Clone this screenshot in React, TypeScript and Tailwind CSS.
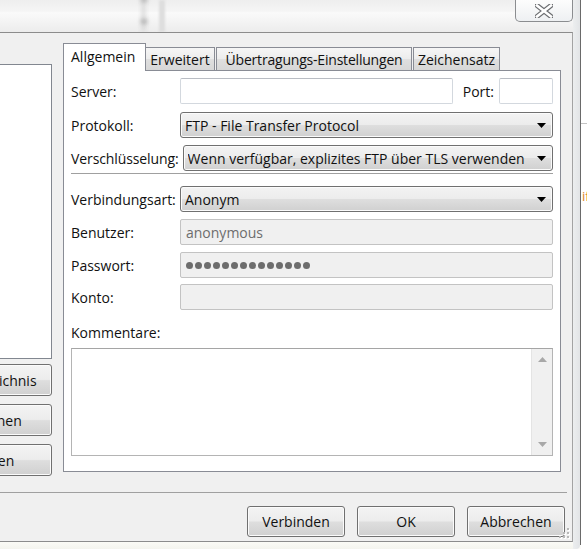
import type { ReactNode } from 'react'

// shared win7-ish bevel used by buttons and dropdowns
const BEVEL =
  'border border-[#707070] bg-[linear-gradient(#f3f3f3,#ececec_48%,#dedede_52%,#d0d0d0)] shadow-[inset_0_0_0_1px_#fbfbfb]'

const TAB_BG = 'bg-[linear-gradient(#f6f6f6,#ececec_50%,#dfdfdf_52%,#d7d7d7)]'

function DropArrow() {
  return (
    <svg width="9" height="5" viewBox="0 0 9 5" className="shrink-0">
      <path d="M0 0h9L4.5 5z" fill="#000" />
    </svg>
  )
}

function Combo({ value, className = '' }: { value: string; className?: string }) {
  return (
    <div className={`h-[26px] flex items-center rounded-[3px] pl-[4px] pr-[6px] ${BEVEL} ${className}`}>
      <span className="flex-1 truncate">{value}</span>
      <DropArrow />
    </div>
  )
}

function Field({ disabled, children, className = '' }: { disabled?: boolean; children?: ReactNode; className?: string }) {
  return (
    <div
      className={
        disabled
          ? `h-[26px] flex items-center rounded-[2px] border border-[#c3c3c3] bg-[#f0f0f0] px-[5px] text-[#6d6d6d] ${className}`
          : `h-[26px] flex items-center rounded-[2px] border border-[#d3d8de] border-t-[#b9bdc4] bg-white px-[5px] ${className}`
      }
    >
      {children}
    </div>
  )
}

function Btn({ children, className = '' }: { children: ReactNode; className?: string }) {
  return (
    <div className={`h-[31px] flex items-center justify-center rounded-[3px] whitespace-nowrap ${BEVEL} ${className}`}>
      {children}
    </div>
  )
}

function Label({ children }: { children: ReactNode }) {
  return <span className="w-[109px] shrink-0 whitespace-nowrap">{children}</span>
}

function CloseGlyph() {
  return (
    <svg width="18" height="14" viewBox="0 0 18 14">
      <path d="M2 1.5L16 12.5M16 1.5L2 12.5" stroke="#6b6d70" strokeWidth="5" strokeLinecap="square" />
      <path d="M2 1.5L16 12.5M16 1.5L2 12.5" stroke="#ffffff" strokeWidth="2.6" strokeLinecap="square" />
    </svg>
  )
}

function TitleStrip() {
  return (
    <div className="h-[32px] relative bg-[linear-gradient(#eeeeee,#f5f5f5_35%,#fafafa_40%,#ececec)] overflow-hidden">
      <div className="absolute left-[142px] top-0 w-[3px] h-[32px] bg-[#d2d2d2] blur-[2px]" />
      <div className="absolute left-[159px] top-0 w-[6px] h-[32px] bg-[#dedede] blur-[1px]" />
      <div className="absolute left-[141px] top-[-3px] w-[6px] h-[5px] bg-[#b0b0b0] blur-[2px]" />
      <div className="absolute left-[141px] top-[19px] w-[6px] h-[5px] bg-[#b0b0b0] blur-[2px]" />
      <div className="absolute left-[515px] top-0 w-[58px] h-[22px] rounded-b-[5px] border border-t-0 border-[#8b8d90] bg-[linear-gradient(#fdfdfd,#eef0f2)] flex items-center justify-center">
        <CloseGlyph />
      </div>
    </div>
  )
}

function Tabs() {
  return (
    <div className="h-[27px] flex items-end whitespace-nowrap">
      <div className="w-[83px] h-[28px] -mb-px relative z-10 border border-b-0 border-[#898c95] bg-white pl-[7px] pt-[2px]">
        Allgemein
      </div>
      <div className={`w-[69px] h-[23px] border-t border-r border-[#898c95] flex items-center justify-center ${TAB_BG}`}>
        Erweitert
      </div>
      <div className={`w-[196px] h-[23px] ml-[1px] border border-b-0 border-[#898c95] flex items-center justify-center tracking-[-0.2px] ${TAB_BG}`}>
        Übertragungs-Einstellungen
      </div>
      <div className={`w-[87px] h-[23px] ml-[1px] border border-b-0 border-[#898c95] flex items-center justify-center ${TAB_BG}`}>
        Zeichensatz
      </div>
    </div>
  )
}

function GeneralPage() {
  return (
    <div className="h-[402px] border border-[#898c95] bg-white px-[7px] pt-[7px] flex flex-col">
      <div className="flex items-center">
        <Label>Server:</Label>
        <Field className="flex-1" />
        <span className="ml-[10px] mr-[5px]">Port:</span>
        <Field className="w-[54px]" />
      </div>
      <div className="flex items-center mt-[8px]">
        <Label>Protokoll:</Label>
        <Combo className="flex-1" value="FTP - File Transfer Protocol" />
      </div>
      <div className="flex items-center mt-[7px]">
        <span className="whitespace-nowrap tracking-[-0.1px]">Verschlüsselung:</span>
        <Combo className="flex-1 ml-[4px]" value="Wenn verfügbar, explizites FTP über TLS verwenden" />
      </div>
      <div className="mt-[2px] h-px bg-[#a0a0a0]" />
      <div className="flex items-center mt-[12px]">
        <Label>Verbindungsart:</Label>
        <Combo className="flex-1" value="Anonym" />
      </div>
      <div className="flex items-center mt-[7px]">
        <Label>Benutzer:</Label>
        <Field disabled className="flex-1">anonymous</Field>
      </div>
      <div className="flex items-center mt-[7px]">
        <Label>Passwort:</Label>
        <Field disabled className="flex-1">
          <div className="flex gap-[2px]">
            {Array.from({ length: 14 }).map((_, i) => (
              <span key={i} className="w-[7px] h-[7px] rounded-full bg-[#6d6d6d]" />
            ))}
          </div>
        </Field>
      </div>
      <div className="flex items-center mt-[6px]">
        <Label>Konto:</Label>
        <Field disabled className="flex-1" />
      </div>
      <div className="mt-[14px] h-[17px] leading-[17px]">Kommentare:</div>
      <div className="mt-[7px] h-[108px] border border-[#b4b4b4] border-t-[#a5a5a5] bg-white flex justify-end">
        <div className="w-[21px] bg-[#f0f0f0] border-l border-[#e4e4e4] flex flex-col items-center justify-between py-[8px]">
          <svg width="9" height="5" viewBox="0 0 9 5">
            <path d="M0 5h9L4.5 0z" fill="#a8a8a8" />
          </svg>
          <svg width="9" height="5" viewBox="0 0 9 5">
            <path d="M0 0h9L4.5 5z" fill="#a8a8a8" />
          </svg>
        </div>
      </div>
    </div>
  )
}

function SiteColumn() {
  return (
    <div className="w-[52px] shrink-0 mt-[21px] flex flex-col items-end overflow-hidden">
      <div className="w-[52px] h-[295px] border border-l-0 border-[#828790] bg-white" />
      <div className="mt-[5px] flex flex-col items-end gap-[8px]">
        <Btn className="w-[150px] h-[32px]">Neues Verzeichnis</Btn>
        <Btn className="w-[150px] h-[32px]">Umbenennen</Btn>
        <Btn className="w-[150px] h-[32px]">Duplizieren</Btn>
      </div>
    </div>
  )
}

function SizeGrip() {
  const dots = [
    [8, 0],
    [8, 4],
    [4, 4],
    [8, 8],
    [4, 8],
    [0, 8],
  ]
  return (
    <svg width="11" height="11" viewBox="0 0 11 11" className="absolute right-[2px] bottom-[2px]">
      {dots.map(([x, y], i) => (
        <g key={i}>
          <rect x={x + 1} y={y + 1} width="2" height="2" fill="#ffffff" />
          <rect x={x} y={y} width="2" height="2" fill="#b8b8b8" />
        </g>
      ))}
    </svg>
  )
}

export default function App() {
  return (
    <div className="w-[587px] h-[549px] overflow-hidden flex bg-[#fbfbf7] text-[14px] text-[#111] font-['Open_Sans','Liberation_Sans',sans-serif]">
      <div className="w-[573px] shrink-0 flex flex-col">
        <TitleStrip />
        <div className="h-[510px] relative border-t border-b border-r border-t-[#8c8c8c] border-b-[#8c8c8c] border-r-[#a3a3a3] bg-[#f0f0f0] flex flex-col">
          <div className="flex pt-[10px]">
            <SiteColumn />
            <div className="w-[498px] ml-[11px] flex flex-col">
              <Tabs />
              <GeneralPage />
            </div>
          </div>
          <div className="mt-[16px] mr-[5px] h-px bg-[#a0a0a0]" />
          <div className="mt-[13px] flex justify-end gap-[12px] pr-[7px]">
            <Btn className="w-[98px]">Verbinden</Btn>
            <Btn className="w-[98px]">OK</Btn>
            <Btn className="w-[98px]">Abbrechen</Btn>
          </div>
          <SizeGrip />
        </div>
        <div className="flex-1 bg-[linear-gradient(#fbfbf6,#f4f4ee)]" />
      </div>
      <div className="w-[7px] shrink-0 bg-[linear-gradient(90deg,#eceeef,#e2e4e6)] rounded-br-[4px]" />
      <div className="w-px shrink-0 h-[545px] bg-[#6a6a6a]" />
      <div className="flex-1 relative bg-white">
        <div className="absolute left-0 top-[123px] w-[6px] h-px bg-[#c4c4c4]" />
        <div className="absolute left-[1px] top-[190px] text-[#d9822b] text-[13px] leading-none">if</div>
      </div>
    </div>
  )
}
